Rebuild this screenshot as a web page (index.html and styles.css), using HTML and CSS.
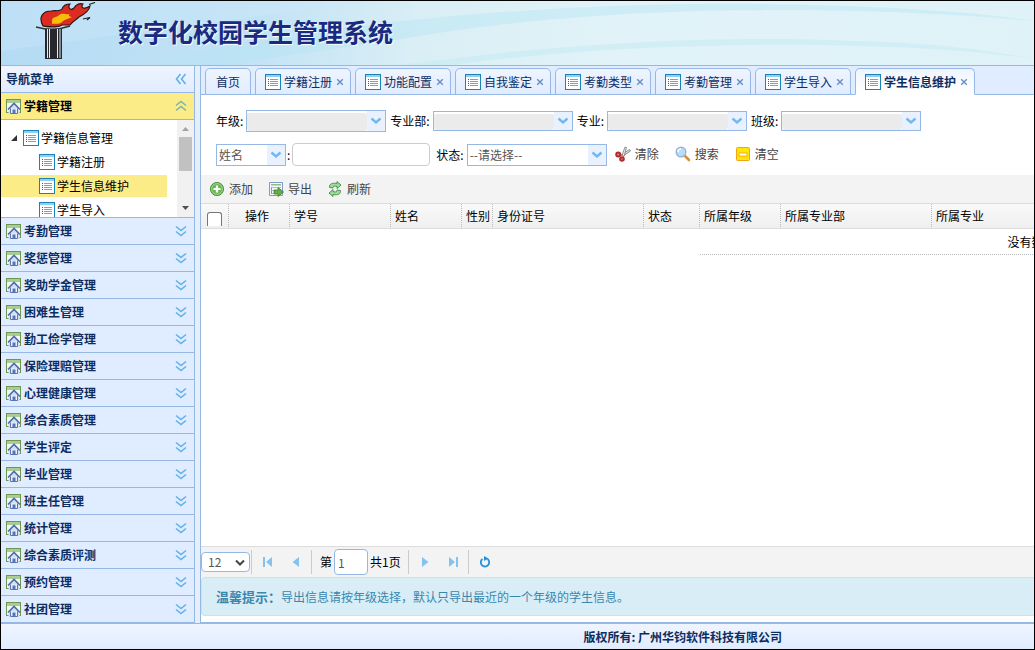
FILE: index.html
```
<!DOCTYPE html>
<html lang="zh-CN">
<head>
<meta charset="utf-8">
<title>数字化校园学生管理系统</title>
<link rel="stylesheet" href="styles.css">
</head>
<body>
<svg class="defs" aria-hidden="true">
  <symbol id="i-list" viewBox="0 0 16 16">
    <rect x="0" y="0" width="16" height="16" fill="#1b82b8"/><rect x="1" y="1" width="14" height="2" fill="#8fd0f2"/><rect x="1" y="3" width="14" height="12" fill="#fff"/>
    <path d="M3 5.500h1M3 7.500h1M3 9.500h1M3 11.500h1" stroke="#2c5f8c"/><path d="M5 5.500h8M5 7.500h8M5 9.500h8M5 11.500h8" stroke="#999"/>
  </symbol>
  <symbol id="i-home" viewBox="0 0 16 16">
    <rect x="0.500" y="1.500" width="14" height="13" fill="#f4f9ef" stroke="#6d9650"/><rect x="1" y="2" width="13" height="3" fill="#a9cd93"/>
    <path d="M2.500 11 8 5.500l5.500 5.500V16h-11z" fill="#d5def2"/><path d="M4.500 10.500v5h7v-5" fill="#e8eefb" stroke="#5c76ae"/><path d="M2 11.500 8 5.500l6 6" fill="none" stroke="#4a6cb0" stroke-width="1.600"/><path d="M6.500 11.500h3V16h-3z" fill="#5675b4"/>
  </symbol>
  <symbol id="i-down" viewBox="0 0 12 12"><path d="M1 1.500 6 5.500l5-4M1 6.500l5 4 5-4" fill="none" stroke="#60b1ea" stroke-width="1.600"/></symbol>
  <symbol id="i-up" viewBox="0 0 12 12"><path d="M1 5.500l5-4 5 4M1 10.500l5-4 5 4" fill="none" stroke="#7fb4a8" stroke-width="1.600"/></symbol>
  <symbol id="i-left" viewBox="0 0 12 12"><path d="M5.500 1 1.500 6l4 5M10.500 1l-4 5 4 5" fill="none" stroke="#60b1ea" stroke-width="1.600"/></symbol>
  <symbol id="i-chev" viewBox="0 0 12 8"><path d="M1.500 1.500 6 5.500l4.500-4" fill="none" stroke="#71b8f0" stroke-width="2.400"/></symbol>
  <symbol id="i-close" viewBox="0 0 8 8"><path d="m1.200 1.200 5.600 5.600m0-5.600L1.200 6.800" stroke="#6b8ec2" stroke-width="1.400"/></symbol>
</svg>

<div class="app">
  <header class="banner">
    <svg class="banner-waves" viewBox="0 0 1033 64" preserveAspectRatio="none" aria-hidden="true">
      <path d="M0 0h370L0 50z" fill="#cfe8f8" opacity=".35"/>
      <path d="M150 64C300 22 560 0 760 3C900 5 980 12 1033 20C860 4 600 2 400 38C320 50 260 58 225 64z" fill="#b5e4f4" opacity=".45"/>
      <path d="M400 64C560 42 720 34 850 40C940 42 990 50 1033 58C900 38 640 38 450 64z" fill="#bfe9f2" opacity=".45"/>
    </svg>
    <svg class="logo" viewBox="0 0 62 58" role="img" aria-label="火炬">
      <path d="M8 24C3 15 8 9 16 9C21 8 25 10 27 7C28 4 31 2 35 2C32 6 36 9 39 6C41 3 44 1 48 2C45 6 49 8 55 4C54 10 48 13 44 15C41 18 37 20 35 23H27C23 26 16 25 8 24z" fill="#dc2c22" stroke="#2c1715" stroke-width="1.200"/>
      <path d="M17 18C18 14 22 16 24 13C28 10 30 13 35 12C32 14 36 15 37 15C33 17 30 17 27 20C23 23 20 21 17 22z" fill="#f7bd09"/>
      <path d="M54 2.500 60 .500M48 17l7-1.500-3 2.500" stroke="#222" stroke-width="1.200" fill="none"/>
      <path d="M1 25C12 28 24 28 35 24" stroke="#333" stroke-width="1.500" fill="none"/>
      <rect x="10" y="27" width="17" height="30" fill="#27282d"/><path d="M12.500 27v29M14.500 27v29M22.500 27v29M25 27v29" stroke="#e6eaf0" stroke-width="1"/>
    </svg>
    <h1>数字化校园学生管理系统</h1>
  </header>

  <div class="middle">
    <nav class="west">
      <h2 class="west-title"><span>导航菜单</span><svg class="tool"><use href="#i-left"/></svg></h2>
      <button class="acc open"><svg class="ico"><use href="#i-home"/></svg><span>学籍管理</span><svg class="tool"><use href="#i-up"/></svg></button>
      <div class="tree-wrap">
        <ul class="tree">
          <li class="root"><svg class="twist" viewBox="0 0 6 6"><path d="M6 0v6H0z" fill="#333"/></svg><svg class="ico"><use href="#i-list"/></svg><span>学籍信息管理</span></li>
          <li><svg class="ico"><use href="#i-list"/></svg><span>学籍注册</span></li>
          <li class="sel"><svg class="ico"><use href="#i-list"/></svg><span>学生信息维护</span></li>
          <li><svg class="ico"><use href="#i-list"/></svg><span>学生导入</span></li>
        </ul>
        <div class="scroll" aria-hidden="true">
          <svg class="sarrow" viewBox="0 0 17 17"><path d="M5 11h7L8.500 7z" fill="#a3a3a3"/></svg>
          <div class="thumb"></div>
          <svg class="sarrow end" viewBox="0 0 17 17"><path d="M5 6h7l-3.500 4z" fill="#505050"/></svg>
        </div>
      </div>
      <button class="acc"><svg class="ico"><use href="#i-home"/></svg><span>考勤管理</span><svg class="tool"><use href="#i-down"/></svg></button>
      <button class="acc"><svg class="ico"><use href="#i-home"/></svg><span>奖惩管理</span><svg class="tool"><use href="#i-down"/></svg></button>
      <button class="acc"><svg class="ico"><use href="#i-home"/></svg><span>奖助学金管理</span><svg class="tool"><use href="#i-down"/></svg></button>
      <button class="acc"><svg class="ico"><use href="#i-home"/></svg><span>困难生管理</span><svg class="tool"><use href="#i-down"/></svg></button>
      <button class="acc"><svg class="ico"><use href="#i-home"/></svg><span>勤工俭学管理</span><svg class="tool"><use href="#i-down"/></svg></button>
      <button class="acc"><svg class="ico"><use href="#i-home"/></svg><span>保险理赔管理</span><svg class="tool"><use href="#i-down"/></svg></button>
      <button class="acc"><svg class="ico"><use href="#i-home"/></svg><span>心理健康管理</span><svg class="tool"><use href="#i-down"/></svg></button>
      <button class="acc"><svg class="ico"><use href="#i-home"/></svg><span>综合素质管理</span><svg class="tool"><use href="#i-down"/></svg></button>
      <button class="acc"><svg class="ico"><use href="#i-home"/></svg><span>学生评定</span><svg class="tool"><use href="#i-down"/></svg></button>
      <button class="acc"><svg class="ico"><use href="#i-home"/></svg><span>毕业管理</span><svg class="tool"><use href="#i-down"/></svg></button>
      <button class="acc"><svg class="ico"><use href="#i-home"/></svg><span>班主任管理</span><svg class="tool"><use href="#i-down"/></svg></button>
      <button class="acc"><svg class="ico"><use href="#i-home"/></svg><span>统计管理</span><svg class="tool"><use href="#i-down"/></svg></button>
      <button class="acc"><svg class="ico"><use href="#i-home"/></svg><span>综合素质评测</span><svg class="tool"><use href="#i-down"/></svg></button>
      <button class="acc"><svg class="ico"><use href="#i-home"/></svg><span>预约管理</span><svg class="tool"><use href="#i-down"/></svg></button>
      <button class="acc"><svg class="ico"><use href="#i-home"/></svg><span>社团管理</span><svg class="tool"><use href="#i-down"/></svg></button>
    </nav>

    <main class="center">
      <div class="tabs" role="tablist">
        <button class="tab plain" role="tab">首页</button>
        <button class="tab" role="tab"><svg class="ico"><use href="#i-list"/></svg><span>学籍注册</span><svg class="close"><use href="#i-close"/></svg></button>
        <button class="tab" role="tab"><svg class="ico"><use href="#i-list"/></svg><span>功能配置</span><svg class="close"><use href="#i-close"/></svg></button>
        <button class="tab" role="tab"><svg class="ico"><use href="#i-list"/></svg><span>自我鉴定</span><svg class="close"><use href="#i-close"/></svg></button>
        <button class="tab" role="tab"><svg class="ico"><use href="#i-list"/></svg><span>考勤类型</span><svg class="close"><use href="#i-close"/></svg></button>
        <button class="tab" role="tab"><svg class="ico"><use href="#i-list"/></svg><span>考勤管理</span><svg class="close"><use href="#i-close"/></svg></button>
        <button class="tab" role="tab"><svg class="ico"><use href="#i-list"/></svg><span>学生导入</span><svg class="close"><use href="#i-close"/></svg></button>
        <button class="tab active" role="tab" aria-selected="true"><svg class="ico"><use href="#i-list"/></svg><span>学生信息维护</span><svg class="close"><use href="#i-close"/></svg></button>
      </div>

      <form class="filters">
        <div class="frow first">
          <label for="grade">年级:</label><span class="combo tall off"><select id="grade"></select><span class="arrow"><svg><use href="#i-chev"/></svg></span></span>
          <label for="dept">专业部:</label><span class="combo off"><select id="dept"></select><span class="arrow"><svg><use href="#i-chev"/></svg></span></span>
          <label for="major">专业:</label><span class="combo off"><select id="major"></select><span class="arrow"><svg><use href="#i-chev"/></svg></span></span>
          <label for="class">班级:</label><span class="combo off"><select id="class"></select><span class="arrow"><svg><use href="#i-chev"/></svg></span></span>
        </div>
        <div class="frow">
          <span class="combo tall small"><select id="field" aria-label="查询字段"><option>姓名</option></select><span class="arrow"><svg><use href="#i-chev"/></svg></span></span>
          <label class="colon" for="keyword">:</label><input class="keyword" id="keyword" type="text">
          <label for="state">状态:</label><span class="combo tall"><select id="state"><option>--请选择--</option></select><span class="arrow"><svg><use href="#i-chev"/></svg></span></span>
          <div class="actions">
            <button type="button" class="link"><svg class="ico" viewBox="0 0 16 16"><path d="M6 9 14.500 3.500l1 1.500L8 10z" fill="#ddd" stroke="#777" stroke-width=".8"/><path d="M7 9.500 10 1l1.500.500-2.500 9z" fill="#eee" stroke="#777" stroke-width=".8"/><circle cx="3.200" cy="8.500" r="2" fill="#e88" stroke="#b52a2a" stroke-width="2"/><circle cx="7" cy="13" r="1.800" fill="#e88" stroke="#b52a2a" stroke-width="2"/></svg><span>清除</span></button>
            <button type="button" class="link"><svg class="ico" viewBox="0 0 16 16"><path d="m9.500 9.500 4.500 4.500" stroke="#d9913a" stroke-width="2.600" stroke-linecap="round"/><circle cx="6" cy="6" r="4.800" fill="#b9dcf8" stroke="#93b4d8" stroke-width="1.400"/><path d="M3 6a3 3 0 0 1 3-3" stroke="#fff" stroke-width="1.500" fill="none"/></svg><span>搜索</span></button>
            <button type="button" class="link"><svg class="ico" viewBox="0 0 16 16"><rect x="1.500" y="1.500" width="13" height="13" rx="1" fill="#ffe608" stroke="#f3a60b"/><rect x="4" y="7" width="8" height="3" fill="#fff" stroke="#f0a014" stroke-width=".8"/></svg><span>清空</span></button>
          </div>
        </div>
      </form>

      <div class="toolbar">
        <button class="link"><svg class="ico" viewBox="0 0 16 16"><circle cx="8" cy="8" r="6.600" fill="#6cb755" stroke="#4f9a42"/><circle cx="8" cy="8" r="5.400" fill="none" stroke="#a8d997" stroke-width=".8"/><path d="M8 4.500v7M4.500 8h7" stroke="#fff" stroke-width="2.200"/></svg><span>添加</span></button>
        <button class="link"><svg class="ico" viewBox="0 0 16 16"><path d="M1.500 1.500h13v13h-13z" fill="#f4f8fd" stroke="#7d9cc8"/><path d="M3 3h10v1.500H3z" fill="#8fb98a"/><path d="M3 6.500h10M3 9.500h10M3 12.500h10" stroke="#a8bdd8"/><path d="M3.500 6v7" stroke="#7d9cc8"/><path d="M6 9h4V6.500l5.500 4.500-5.500 4.500V13H6z" fill="#6aab48" stroke="#3d7d25" stroke-width=".8"/></svg><span>导出</span></button>
        <button class="link"><svg class="ico" viewBox="0 0 16 16"><path d="M2.500 6.500C2 3 5 1.500 10 2.500V.5L14 4l-4 3.500v-2C7 4.500 6 5 6 7z" fill="#9edb96" stroke="#3f8b4a" stroke-width=".9"/><path d="M13.500 9.500C14 13 11 14.500 6 13.500v2L2 12l4-3.500v2c3 1 4 .5 4-1.500z" fill="#9edb96" stroke="#3f8b4a" stroke-width=".9"/></svg><span>刷新</span></button>
      </div>

      <div class="grid">
        <table>
          <colgroup><col class="c-check"><col class="c-op"><col class="c-no"><col class="c-name"><col class="c-sex"><col class="c-id"><col class="c-state"><col class="c-grade"><col class="c-dept"><col class="c-major"></colgroup>
          <thead><tr>
            <th class="check"><input type="checkbox" aria-label="全选"></th><th class="mid">操作</th><th>学号</th><th>姓名</th><th>性别</th><th>身份证号</th><th>状态</th><th>所属年级</th><th>所属专业部</th><th>所属专业</th>
          </tr></thead>
          <tbody><tr><td colspan="7"></td><td class="empty" colspan="3">没有数据</td></tr></tbody>
        </table>
      </div>

      <div class="pager">
        <span class="size"><select aria-label="每页条数"><option>12</option></select><svg viewBox="0 0 10 8"><path d="m1 1.500 4 4 4-4" fill="none" stroke="#444" stroke-width="2"/></svg></span>
        <span class="sep"></span>
        <button aria-label="首页"><svg viewBox="0 0 12 12"><path d="M1 1h2v10H1zM10 1v10L4 6z" fill="#84c3ee"/></svg></button>
        <button aria-label="上一页"><svg viewBox="0 0 12 12"><path d="M9 1v10L2.500 6z" fill="#84c3ee"/></svg></button>
        <span class="sep"></span>
        <label class="pl" for="page">第</label><input id="page" type="text" value="1"><span class="total">共1页</span>
        <span class="sep"></span>
        <button aria-label="下一页"><svg viewBox="0 0 12 12"><path d="M3 1v10l6.500-5z" fill="#84c3ee"/></svg></button>
        <button aria-label="末页"><svg viewBox="0 0 12 12"><path d="M9 1h2v10H9zM2 1v10l6-5z" fill="#84c3ee"/></svg></button>
        <span class="sep"></span>
        <button aria-label="刷新"><svg viewBox="0 0 12 12"><path d="M3.500 3A4.200 4.200 0 1 0 8.500 3" fill="none" stroke="#2590dc" stroke-width="1.800"/><path d="M5 0l4.500 2.500L5 5z" fill="#2590dc"/></svg></button>
      </div>

      <p class="tip"><strong>温馨提示：</strong>导出信息请按年级选择，默认只导出最近的一个年级的学生信息。</p>
    </main>
  </div>

  <footer>版权所有: 广州华钧软件科技有限公司</footer>
</div>
</body>
</html>
```
FILE: styles.css
```
* { box-sizing: border-box; }
body {
  margin: 0;
  font: 12px/18px "Noto Sans CJK SC", sans-serif;
  color: #000;
}
button, input, select { font: inherit; color: inherit; margin: 0; }
button { border: 0; background: none; padding: 0; }
svg { display: block; flex: none; }
.defs { position: absolute; width: 0; height: 0; }
.ico { width: 16px; height: 16px; }

.app {
  display: flex;
  flex-direction: column;
  min-height: 100vh;
  border: 1px solid #000;
  background: #e6eef8;
  overflow: hidden;
}

/* banner */
.banner {
  position: relative;
  display: flex;
  align-items: center;
  height: 65px;
  padding: 0 0 4px 34px;
  gap: 21px;
  border-bottom: 1px solid #95b8e7;
  background: linear-gradient(100deg, #b4dbf4 0%, #c2e3f5 25%, #d9eef5 40%, #e1f3f8 60%, #dff2f7 100%);
}
.banner-waves { position: absolute; inset: 0; width: 100%; height: 100%; }
.logo { position: relative; width: 62px; height: 58px; }
.banner h1 {
  position: relative;
  margin: 0;
  font-size: 25px;
  line-height: 36px;
  font-weight: 700;
  color: #1a2a80;
  text-shadow: 1px 1px 1px #fff;
}

/* layout */
.middle { display: flex; flex: 1; gap: 5px; }
.west { width: 194px; flex: none; border-right: 1px solid #95b8e7; background: #fff; }
.center {
  flex: 1;
  min-width: 0;
  display: flex;
  flex-direction: column;
  background: #fff;
  border-left: 1px solid #95b8e7;
  border-bottom: 1px solid #95b8e7;
}

/* accordion */
.west-title, .acc {
  display: flex;
  align-items: center;
  width: 100%;
  height: 27px;
  margin: 0;
  padding: 0 7px 0 5px;
  border-bottom: 1px solid #95b8e7;
  font-size: 12px;
  font-weight: 700;
  color: #0e2d5f;
  background: #e0ecff;
}
.west-title { background: linear-gradient(#eff5ff, #e0ecff); }
.acc { gap: 2px; }
.acc.open { background: #fbec88; color: #000; }
.tool { width: 12px; height: 12px; margin-left: auto; }

/* tree */
.tree-wrap { display: flex; height: 98px; overflow: hidden; border-bottom: 1px solid #95b8e7; }
.tree {
  flex: 1;
  display: flex;
  flex-direction: column;
  gap: 2px;
  margin: 0;
  padding: 7px 10px 0 0;
  list-style: none;
}
.tree li { display: flex; flex: none; align-items: center; gap: 2px; height: 22px; padding-left: 38px; }
.tree li.root { padding-left: 10px; }
.twist { width: 6px; height: 6px; margin-right: 4px; }
.tree li.sel { background: #fbec88; }
.scroll { width: 17px; display: flex; flex-direction: column; background: #f1f1f1; }
.sarrow { width: 17px; height: 17px; }
.sarrow.end { margin-top: auto; }
.thumb { height: 34px; margin: 0 2px; background: #c1c1c1; }

/* tabs */
.tabs {
  display: flex;
  align-items: flex-end;
  gap: 4px;
  height: 29px;
  padding-left: 4px;
  background: #e0ecff;
  box-shadow: inset 0 -1px #95b8e7;
}
.tab {
  display: flex;
  flex: none;
  align-items: center;
  height: 27px;
  padding: 0 6px 0 9px;
  border: 1px solid #95b8e7;
  border-radius: 5px 5px 0 0;
  background: linear-gradient(#eff5ff, #e0ecff);
  color: #0e2d5f;
}
.tab span { margin: 0 4px 0 3px; }
.tab.plain { padding: 0 10px; }
.tab.active { background: linear-gradient(#eff5ff, #fff); border-bottom-color: #fff; font-weight: 700; }
.close { width: 8px; height: 8px; }

/* filters */
.filters { padding: 15px 15px 9px; }
.frow { display: flex; align-items: center; min-height: 22px; }
.frow.first { margin-bottom: 11px; }
.frow label { margin-right: 3px; }
.frow label.colon { margin: 0 2px 0 1px; }
.combo {
  position: relative;
  width: 140px;
  height: 20px;
  margin-right: 4px;
  border: 1px solid #95b8e7;
  background: #fff;
}
.combo.tall { height: 22px; }
.combo.small { width: 70px; margin-right: 0; }
.combo select {
  display: block;
  width: 100%;
  height: 100%;
  padding: 0 18px 0 2px;
  border: 0;
  appearance: none;
  background: transparent;
  color: #555;
}
.combo.off select {
  width: calc(100% - 18px);
  padding: 0;
  border-top: 2px solid #fff;
  border-radius: 3px;
  background: #ebebeb;
}
.combo .arrow {
  position: absolute;
  inset: 0 0 0 auto;
  width: 18px;
  display: flex;
  align-items: center;
  justify-content: center;
  background: #e9f1ff;
  pointer-events: none;
}
.arrow svg { width: 12px; height: 8px; }
.keyword {
  width: 138px;
  height: 23px;
  margin-right: 6px;
  border: 1px solid #ccc;
  border-radius: 4px;
  background: #fff;
}
.actions { display: flex; gap: 16px; padding: 0 0 2px 4px; }
.link { display: flex; align-items: center; gap: 4px; color: #444; }

/* toolbar */
.toolbar {
  display: flex;
  align-items: center;
  gap: 15px;
  height: 29px;
  padding-left: 8px;
  border-bottom: 1px solid #ddd;
  background: #f3f3f3;
}

/* grid */
.grid { flex: 1; overflow: hidden; }
.grid table { table-layout: fixed; width: 1162px; border-collapse: separate; border-spacing: 0; }
.c-check { width: 28px; }
.c-op { width: 61px; }
.c-no { width: 101px; }
.c-name { width: 71px; }
.c-sex { width: 31px; }
.c-id { width: 151px; }
.c-state { width: 56px; }
.c-grade { width: 81px; }
.c-dept { width: 151px; }
.grid th {
  height: 25px;
  padding: 0 0 0 4px;
  text-align: left;
  font-weight: 400;
  white-space: nowrap;
  border-right: 1px dotted #bbb;
  border-bottom: 1px solid #ddd;
  background: linear-gradient(#f9f9f9, #efefef);
}
.grid th.mid { text-align: center; padding: 0 4px 0 0; }
.grid th.check { padding: 6px 0 0 6px; line-height: 0; }
.check input {
  appearance: none;
  display: block;
  width: 15px;
  height: 14px;
  border: 1px solid #767676;
  border-bottom: 0;
  border-radius: 3px 3px 0 0;
  background: #fff;
}
.grid td { height: 26px; padding: 0; }
.grid td.empty { text-align: center; border-bottom: 1px dotted #bbb; }

/* pager */
.pager {
  display: flex;
  align-items: center;
  height: 31px;
  border-top: 1px solid #ddd;
  background: #f3f3f3;
}
.size { position: relative; width: 49px; height: 20px; }
.size select {
  display: block;
  width: 100%;
  height: 100%;
  padding: 0 6px;
  border: 1px solid #95b8e7;
  border-radius: 4px;
  appearance: none;
  background: #fff;
  color: #555;
}
.size svg { position: absolute; right: 5px; top: 7px; width: 10px; height: 8px; pointer-events: none; }
.sep { width: 1px; height: 24px; margin: 0 2px 0 1px; background: #ccc; }
.pager button { width: 28px; height: 24px; display: flex; align-items: center; justify-content: center; }
.pager button svg { width: 12px; height: 12px; }
.pager .pl { margin: 0 2px 0 6px; }
.pager input {
  width: 34px;
  height: 26px;
  padding: 0 3px;
  border: 1px solid #95b8e7;
  border-radius: 4px;
  background: #fff;
  color: #555;
}
.total { margin: 0 6px 0 2px; }

/* tip */
.tip {
  margin: 0 0 6px;
  padding: 10px 14px 9px;
  border: 1px solid #bce8f1;
  border-right: 0;
  border-radius: 4px 0 0 4px;
  background: #d9edf7;
  color: #3a87ad;
}
.tip strong { font-size: 13px; }

footer {
  height: 26px;
  padding-left: 32%;
  border-top: 1px solid #95b8e7;
  background: linear-gradient(#eff5ff, #e0ecff);
  text-align: center;
  line-height: 26px;
  font-weight: 700;
  color: #0e2d5f;
}
```
